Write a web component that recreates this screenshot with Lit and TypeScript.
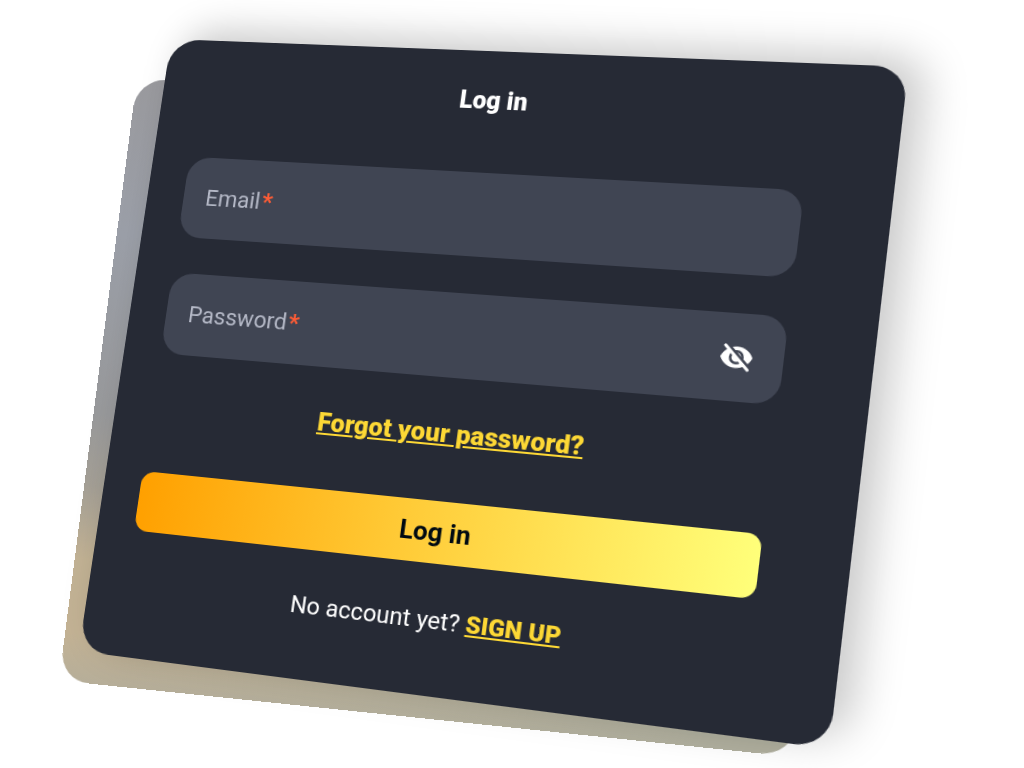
import { LitElement, html, css } from "lit";
import { customElement, state } from "lit/decorators.js";

@customElement("app-root")
export class AppRoot extends LitElement {
  @state() private revealed = false;

  static styles = css`
    :host {
      display: grid;
      place-items: center;
      min-height: 100vh;
      overflow: hidden;
      background: #fff;
      font-family: Roboto, "Liberation Sans", sans-serif;
      font-size: 24px;
      line-height: 32px;
      color: #fff;
    }
    * {
      box-sizing: border-box;
    }
    .scene {
      display: grid;
      width: 100%;
      max-width: 744px;
    }
    .backdrop,
    .card {
      grid-area: 1 / 1;
      border-radius: 32px;
    }
    .backdrop {
      background:
        linear-gradient(to right, transparent 8%, #b0af9e 90%),
        linear-gradient(
          to bottom,
          #9a9a9e 0%,
          #9b9fa8 26%,
          #98999b 56%,
          #a49f95 68%,
          #c2b294 80%,
          #c3b294 92%,
          #b6ae99 100%
        );
      transform: matrix3d(0.98731, 0.06348, 0, -0.00011432, -0.1114, 0.96191, 0, -0.0000318, 0, 0, 1, 0, -64, 16, 0, 1);
    }
    .card {
      display: flex;
      flex-direction: column;
      padding: 36px 82px 58px 40px;
      background: #262a35;
      box-shadow: 16px -10px 40px rgba(0, 0, 0, 0.22);
      transform: matrix3d(1.002, 0.08458, 0, -0.00014138, -0.13167, 0.98973, 0, -0.00004523, 0, 0, 1, 0, -34, -14, 0, 1);
    }
    .title {
      margin: 0 0 58px;
      font-size: 25px;
      line-height: 32px;
      font-weight: 900;
      text-align: center;
    }
    .fields {
      display: grid;
      gap: 38px;
    }
    .field {
      display: grid;
      grid-template-columns: 1fr auto;
      align-items: center;
      height: 86px;
      border-radius: 24px;
      background: #404553;
    }
    .label {
      grid-area: 1 / 1;
      padding-left: 24px;
      color: #b4b8c6;
      pointer-events: none;
    }
    .required {
      margin-left: 2px;
      color: #ff5c35;
      font-weight: 900;
    }
    .input {
      grid-area: 1 / 1;
      width: 100%;
      height: 100%;
      padding: 0 24px;
      border: 0;
      outline: 0;
      border-radius: 24px;
      background: transparent;
      color: #fff;
      font: inherit;
    }
    .input:not(:placeholder-shown) + .label {
      visibility: hidden;
    }
    .toggle {
      grid-area: 1 / 2;
      display: flex;
      margin-right: 28px;
      padding: 0;
      border: 0;
      background: none;
      color: #fff;
      cursor: pointer;
    }
    .eye {
      width: 32px;
      height: 32px;
      fill: none;
      stroke: currentColor;
      stroke-linecap: round;
    }
    .link {
      color: #fdd835;
      font-weight: 900;
      text-decoration: underline;
      text-decoration-thickness: 2px;
      text-underline-offset: 2px;
    }
    .forgot {
      margin: 40px 0 52px;
      font-size: 26px;
      text-align: center;
    }
    .submit {
      height: 62px;
      padding: 0;
      border: 0;
      border-radius: 14px;
      background: linear-gradient(to right, #ffa000, #ffff7a);
      color: #000a12;
      font: inherit;
      font-size: 26px;
      font-weight: 700;
      cursor: pointer;
    }
    .signup {
      margin: 40px 0 0;
      text-align: center;
    }
  `;

  private toggle() {
    this.revealed = !this.revealed;
  }

  render() {
    return html`
      <main class="scene">
        <div class="backdrop"></div>
        <form class="card" @submit=${(e: Event) => e.preventDefault()}>
          <h1 class="title">Log in</h1>
          <div class="fields">
            <div class="field">
              <input class="input" id="email" type="email" placeholder=" " required />
              <label class="label" for="email">Email<span class="required">*</span></label>
            </div>
            <div class="field">
              <input
                class="input"
                id="password"
                type=${this.revealed ? "text" : "password"}
                placeholder=" "
                required
              />
              <label class="label" for="password">Password<span class="required">*</span></label>
              <button class="toggle" type="button" aria-label="Show password" @click=${this.toggle}>
                <svg class="eye" viewBox="0 0 24 24" aria-hidden="true">
                  <path
                    fill="currentColor"
                    stroke="none"
                    d="M12 4.2C6.800 4.200 2.600 7.300.700 12c1.900 4.700 6.100 7.800 11.300 7.800s9.400-3.100 11.300-7.800C21.400 7.300 17.200 4.200 12 4.200z"
                  />
                  <circle cx="12" cy="12" r="4.300" stroke="#404553" stroke-width="1.800" />
                  <path d="M5.200 3L21.800 19.600" stroke="#404553" stroke-width="2.400" />
                  <path d="M3.600 3.600L20.600 20.800" stroke-width="2.200" />
                </svg>
              </button>
            </div>
          </div>
          <div class="forgot"><a class="link" href="#forgot">Forgot your password?</a></div>
          <button class="submit" type="submit">Log in</button>
          <p class="signup">No account yet? <a class="link" href="#signup">SIGN UP</a></p>
        </form>
      </main>
    `;
  }
}
